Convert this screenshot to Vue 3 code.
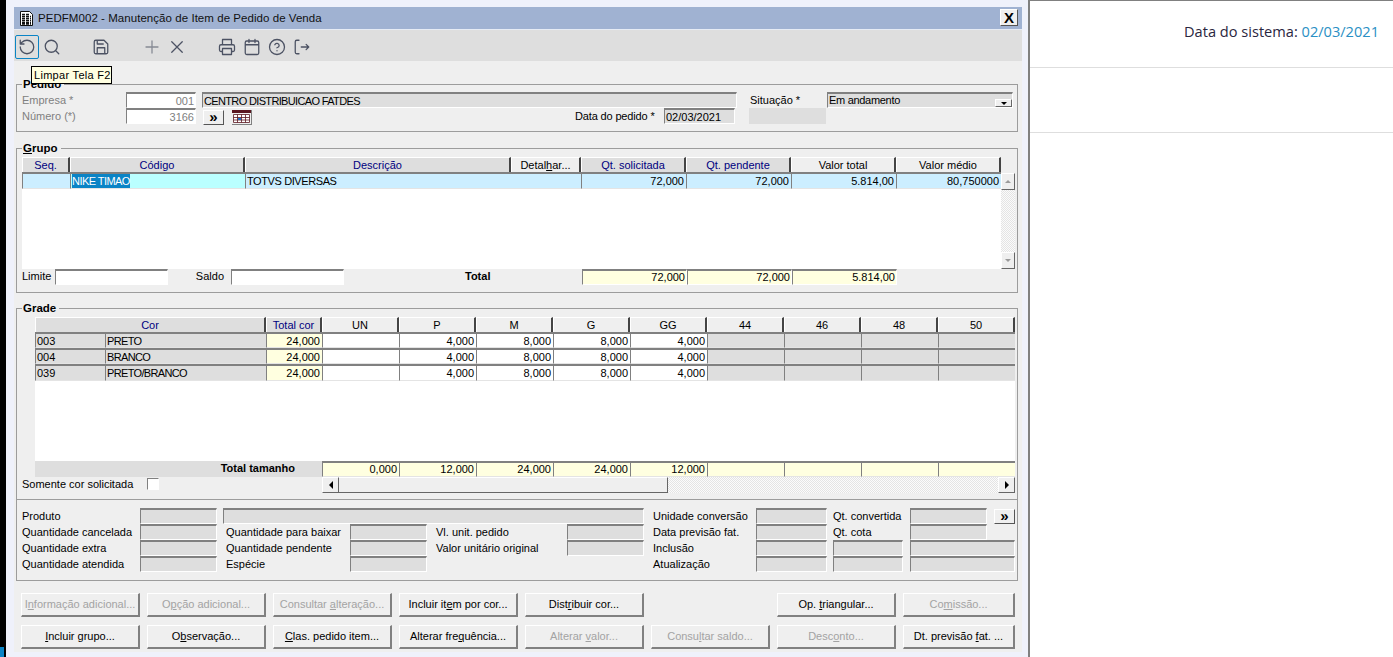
<script setup>
const icons = [
  { d: 'M3 12a9 9 0 1 0 9-9 9.75 9.75 0 0 0-6.74 2.74L3 8M3 3v5h5', cls: 'active' },
  { d: 'M11 3a8 8 0 1 0 0 16a8 8 0 1 0 0-16M21 21l-4.3-4.3', cls: '' },
  { d: 'M19 21H5a2 2 0 0 1-2-2V5a2 2 0 0 1 2-2h11l5 5v11a2 2 0 0 1-2 2zM17 21v-8H7v8M7 3v5h8', cls: 'ml25' },
  { d: 'M12 4v16M4 12h16', cls: 'ml27 faint' },
  { d: 'M5 5l14 14M19 5L5 19', cls: '' },
  { d: 'M6 9V2h12v7M6 18H4a2 2 0 0 1-2-2v-5a2 2 0 0 1 2-2h16a2 2 0 0 1 2 2v5a2 2 0 0 1-2 2h-2M6 14h12v8H6z', cls: 'ml26' },
  { d: 'M5 4h14a2 2 0 0 1 2 2v14a2 2 0 0 1-2 2H5a2 2 0 0 1-2-2V6a2 2 0 0 1 2-2zM8 2v4M16 2v4M8 4h8M3 9h18', cls: '' },
  { d: 'M12 2a10 10 0 1 0 0 20a10 10 0 1 0 0-20M9.1 9a3 3 0 0 1 5.8 1c0 2-3 3-3 3M12 17h.01', cls: '' },
  { d: 'M8 3H5a2 2 0 0 0-2 2v14a2 2 0 0 0 2 2h3M11 12h10M17.5 8.5l3.5 3.5-3.5 3.5', cls: '' },
]

const groupHeaders = [
  { t: 'Seq.', key: true }, { t: 'Código', key: true }, { t: 'Descrição', key: true },
  { a: 'Detal', u: 'h', b: 'ar...' }, { t: 'Qt. solicitada', key: true }, { t: 'Qt. pendente', key: true },
  { t: 'Valor total' }, { t: 'Valor médio' },
]
const groupRow = ['72,000', '72,000', '5.814,00', '80,750000']
const sizes = ['UN', 'P', 'M', 'G', 'GG', '44', '46', '48', '50']
const colors = [
  { c: '003', n: 'PRETO' },
  { c: '004', n: 'BRANCO' },
  { c: '039', n: 'PRETO/BRANCO' },
]
const rowVals = ['', '4,000', '8,000', '8,000', '4,000', null, null, null, null]
const totals = ['0,000', '12,000', '24,000', '24,000', '12,000', '', '', '', '']

const info = [
  { l: 'Produto', c: '1', r: 1 }, { f: 1, c: '2', r: 1 }, { f: 1, c: '4 / 9', r: 1 },
  { l: 'Unidade conversão', c: '10', r: 1 }, { f: 1, c: '11', r: 1 }, { l: 'Qt. convertida', c: '13 / 15', r: 1 }, { f: 1, c: '15', r: 1 },
  { l: 'Quantidade cancelada', c: '1', r: 2 }, { f: 1, c: '2', r: 2 }, { l: 'Quantidade para baixar', c: '4', r: 2, i: 1 }, { f: 1, c: '5', r: 2 },
  { l: 'Vl. unit. pedido', c: '7', r: 2 }, { f: 1, c: '8', r: 2 }, { l: 'Data previsão fat.', c: '10', r: 2 }, { f: 1, c: '11', r: 2 },
  { l: 'Qt. cota', c: '13 / 15', r: 2 }, { f: 1, c: '15', r: 2 },
  { l: 'Quantidade extra', c: '1', r: 3 }, { f: 1, c: '2', r: 3 }, { l: 'Quantidade pendente', c: '4', r: 3, i: 1 }, { f: 1, c: '5', r: 3 },
  { l: 'Valor unitário original', c: '7', r: 3 }, { f: 1, c: '8', r: 3 }, { l: 'Inclusão', c: '10', r: 3 }, { f: 1, c: '11', r: 3 }, { f: 1, c: '13', r: 3 }, { f: 1, c: '15 / 18', r: 3 },
  { l: 'Quantidade atendida', c: '1', r: 4 }, { f: 1, c: '2', r: 4 }, { l: 'Espécie', c: '4', r: 4, i: 1 }, { f: 1, c: '5', r: 4 },
  { l: 'Atualização', c: '10', r: 4 }, { f: 1, c: '11', r: 4 }, { f: 1, c: '13', r: 4 }, { f: 1, c: '15 / 18', r: 4 },
]

const buttons = [
  { a: 'I', u: 'n', b: 'formação adicional...', off: true },
  { a: 'O', u: 'p', b: 'ção adicional...', off: true },
  { a: 'Consultar ', u: 'a', b: 'lteração...', off: true },
  { a: 'Incluir it', u: 'e', b: 'm por cor...' },
  { a: 'Dist', u: 'r', b: 'ibuir cor...' },
  { empty: true },
  { a: 'Op. ', u: 't', b: 'riangular...' },
  { a: 'Co', u: 'm', b: 'issão...', off: true },
  { a: '', u: 'I', b: 'ncluir grupo...' },
  { a: 'O', u: 'b', b: 'servação...' },
  { a: '', u: 'C', b: 'las. pedido item...' },
  { a: 'Alterar fre', u: 'q', b: 'uência...' },
  { a: 'Alterar ', u: 'v', b: 'alor...', off: true },
  { a: 'Consu', u: 'l', b: 'tar saldo...', off: true },
  { a: 'Desc', u: 'o', b: 'nto...', off: true },
  { a: 'Dt. previsão ', u: 'f', b: 'at. ...' },
]
</script>

<template>
  <div class="page">
    <div class="strip"><div class="strip-blue"></div></div>
    <div class="main">
      <div class="window">
        <div class="titlebar">
          <svg class="doc" width="13" height="15" viewBox="0 0 13 15">
            <path d="M0.5 0.5h9l3 3v11h-12z" fill="#fff" stroke="#111" />
            <path d="M2 3.5h7M2 5.5h9M2 7.5h9M2 9.5h9M2 11.5h9M2 13h9" stroke="#111" stroke-width="1.3" stroke-dasharray="3 1" />
          </svg>
          <span class="title-text">PEDFM002 - Manutenção de Item de Pedido de Venda</span>
          <button class="close">X</button>
        </div>
        <div class="toolbar">
          <div v-for="(ic, i) in icons" :key="i" class="tool" :class="ic.cls">
            <svg width="18" height="18" viewBox="0 0 24 24" fill="none" stroke-width="1.7" stroke-linecap="round" stroke-linejoin="round">
              <path :d="ic.d" />
            </svg>
          </div>
        </div>
        <div class="body">
          <div class="tooltip">Limpar Tela F2</div>

          <section class="box pedido">
            <span class="legend">Pedido</span>
            <div class="frow">
              <span class="lbl dim w104">Empresa *</span>
              <span class="inp num dimtext w70">001</span>
              <span class="inp ro desc caps7">CENTRO DISTRIBUICAO FATDES</span>
              <span class="lbl situ">Situação *</span>
              <span class="inp ro sel">Em andamento<i class="drop"><b></b></i></span>
            </div>
            <div class="frow">
              <span class="lbl dim w104">Número (*)</span>
              <span class="inp num dimtext w70">3166</span>
              <button class="mini go">»</button>
              <svg class="cal" width="20" height="15" viewBox="0 0 20 15">
                <rect width="20" height="15" fill="#808080" />
                <rect width="19" height="14" fill="#efefef" />
                <rect width="19" height="3" fill="#5a1620" />
                <path d="M1.5 4.5h16v8h-16zM1.5 7.5h16M1.5 10h16M5.5 4.5v8M9.5 4.5v8M13.5 4.5v8" fill="#fff" stroke="#5a1620" stroke-width="0.8" />
                <rect x="6" y="8" width="3" height="2" fill="#1c6fc4" />
              </svg>
              <span class="lbl datelbl">Data do pedido *</span>
              <span class="inp ro dateinp">02/03/2021</span>
              <span class="graybox"></span>
            </div>
          </section>

          <section class="box grupo">
            <span class="legend"><u>G</u>rupo</span>
            <div class="gwrap">
              <div class="gleft">
                <div class="gcols">
                  <div v-for="(h, i) in groupHeaders" :key="i" class="hd" :class="{ key: h.key }">
                    <template v-if="h.t">{{ h.t }}</template>
                    <template v-else>{{ h.a }}<u>{{ h.u }}</u>{{ h.b }}</template>
                  </div>
                </div>
                <div class="gcols grow">
                  <div class="cell blue"></div>
                  <div class="cell cyan"><span class="selected caps5">NIKE TIMAO</span></div>
                  <div class="cell blue span2 caps4">TOTVS DIVERSAS</div>
                  <div v-for="(v, i) in groupRow" :key="i" class="cell blue right">{{ v }}</div>
                </div>
                <div class="gfill"></div>
              </div>
              <div class="vscroll">
                <div class="sb-btn"><b class="up"></b></div>
                <div class="sb-track"></div>
                <div class="sb-btn"><b class="down"></b></div>
              </div>
            </div>
            <div class="gtotal">
              <span class="lbl limite">Limite</span>
              <span class="inp white w113"></span>
              <span class="lbl saldo">Saldo</span>
              <span class="inp white w113"></span>
              <span class="totlbl">Total</span>
              <span class="inp yellow right w105">72,000</span>
              <span class="inp yellow right w105">72,000</span>
              <span class="inp yellow right w105">5.814,00</span>
            </div>
          </section>

          <section class="box grade">
            <span class="legend">Grade</span>
            <div class="rcols">
              <div class="hd key span2">Cor</div>
              <div class="hd key">Total cor</div>
              <div v-for="s in sizes" :key="s" class="hd">{{ s }}</div>
            </div>
            <div v-for="(c, ci) in colors" :key="c.c" class="rcols" :class="ci === 2 ? 'r17' : 'r16'">
              <div class="cell gray">{{ c.c }}</div>
              <div class="cell gray caps7">{{ c.n }}</div>
              <div class="cell yellowc right">24,000</div>
              <template v-for="(v, i) in rowVals" :key="i">
                <div class="cell right" :class="v === null ? 'gray' : 'whitec'">{{ v }}</div>
              </template>
            </div>
            <div class="rfill"></div>
            <div class="rcols r16">
              <div class="tot-label">Total tamanho</div>
              <div v-for="(t, i) in totals" :key="i" class="cell yellowc right tight">{{ t }}</div>
            </div>
            <div class="somente">
              <span class="lbl w125 up1">Somente cor solicitada</span>
              <span class="check"></span>
              <span class="hscroll">
                <span class="hbtn"><b class="left"></b></span>
                <span class="thumb"></span>
                <span class="htrack"></span>
                <span class="hbtn"><b class="rightarrow"></b></span>
              </span>
            </div>
          </section>

          <section class="box info">
            <div class="igrid">
              <template v-for="(it, i) in info" :key="i">
                <span v-if="it.f" class="inp ro" :style="{ gridColumn: it.c, gridRow: it.r }"></span>
                <span v-else class="lbl" :class="{ ind: it.i }" :style="{ gridColumn: it.c, gridRow: it.r }">{{ it.l }}</span>
              </template>
              <button class="mini more">»</button>
            </div>
          </section>

          <div class="actions">
            <template v-for="(b, i) in buttons" :key="i">
              <span v-if="b.empty"></span>
              <button v-else class="act" :class="{ off: b.off }">{{ b.a }}<u>{{ b.u }}</u>{{ b.b }}</button>
            </template>
          </div>
        </div>
      </div>
    </div>
    <aside class="side">
      <div class="side-top">Data do sistema: <span class="sysdate">02/03/2021</span></div>
      <div class="side-band"></div>
    </aside>
  </div>
</template>

<style>
html, body { margin: 0; background: #fff; overflow: hidden; }
</style>

<style scoped>
* { box-sizing: border-box; }
.page {
  display: flex; width: 1393px; height: 657px; overflow: hidden;
  font: 11px/14px "Liberation Sans", Arial, sans-serif; color: #000;
}
.strip { width: 6px; background: #000; display: flex; align-items: flex-end; }
.strip-blue { width: 4px; height: 10px; background: #0a84c6; }
.main { width: 1022px; background: #eff1fb; padding: 7px 6px 0 8px; }
.window { width: 1008px; }

.titlebar {
  height: 23px; background: #a0b2d2; border-bottom: 1px solid #e6ebf4;
  display: flex; align-items: center; padding: 0 4px 0 6px;
}
.doc { flex: none; }
.title-text { margin-left: 5px; font-size: 11.5px; letter-spacing: 0.05px; color: #111; flex: 1; }
.close {
  width: 18px; height: 17px; padding: 0; background: #efefef; font: bold 15px/13px "Liberation Sans", sans-serif; color: #000;
  border: 1px solid; border-color: #fff #555 #555 #fff; margin-bottom: 1px;
}

.toolbar { height: 31px; background: #dedede; display: flex; padding: 5px 0 0 1px; }
.tool {
  width: 24px; height: 24px; margin-left: 1px; display: flex; align-items: center; justify-content: center;
  stroke: #4c5263; border: 1px solid transparent;
}
.tool:first-child { margin-left: 0; }
.tool.active { border-color: #0a84c6; border-radius: 2px; }
.tool.ml25 { margin-left: 25px; }
.tool.ml27 { margin-left: 27px; }
.tool.ml26 { margin-left: 26px; }
.tool.faint { stroke: #868a94; }

.body { position: relative; height: 591px; background: #efefef; padding: 23px 4px 0 2px; }
.tooltip {
  position: absolute; left: 17px; top: 5px; z-index: 3; width: 81px; height: 18px; padding: 1px 2px;
  background: #ffffe1; border: 1px solid #000; white-space: nowrap; letter-spacing: 0.3px;
}

.box { position: relative; border: 1px solid #9c9c9c; width: 1002px; }
.legend {
  position: absolute; left: 5px; top: -7px; padding: 0 3px 0 1px; background: #efefef;
  font-weight: 700; font-size: 11.5px; line-height: 13px;
}
.pedido { height: 48px; padding: 7px 0 0 5px; }
.frow { display: flex; height: 16px; align-items: stretch; }
.lbl { line-height: 17px; white-space: nowrap; }
.up1 { line-height: 15px; }
.dim { color: #808080; }
.w104 { width: 104px; }
.w70 { width: 70px; }
.w113 { width: 113px; }
.w105 { width: 105px; }
.w125 { width: 125px; }
.caps4 { letter-spacing: -0.4px; }
.caps5 { letter-spacing: -0.55px; }
.caps7 { letter-spacing: -0.65px; }
.inp {
  display: block; height: 16px; line-height: 15px; padding: 0 1px; white-space: nowrap; overflow: hidden;
  border-style: solid; border-width: 2px 1px 1px 1px; border-color: #808080 #fff #fff #808080; background: #fff;
}
.ro { background: #dedede; }
.num { text-align: right; }
.dimtext { color: #808080; }
.desc { width: 535px; margin-left: 6px; }
.situ { width: 77px; margin-left: 13px; }
.sel { width: 186px; position: relative; line-height: 13px; letter-spacing: -0.3px; }
.drop {
  position: absolute; right: 0; top: 5px; width: 17px; height: 8px; background: #efefef;
  border: 1px solid; border-color: #fff #666 #666 #fff; display: flex; align-items: center; justify-content: center;
}
.drop b { border: 3px solid transparent; border-top-color: #000; border-bottom: 0; }
.mini {
  width: 21px; height: 15px; padding: 0 0 2px; background: #efefef; color: #000;
  font: bold 15px/10px "Liberation Sans", sans-serif; border: 1px solid; border-color: #fff #555 #555 #fff;
}
.go { margin: 2px 0 0 7px; }
.cal { margin: 2px 0 0 8px; flex: none; }
.datelbl { margin-left: 323px; width: 89px; letter-spacing: -0.15px; }
.dateinp { width: 71px; }
.graybox { width: 77px; height: 16px; margin-left: 14px; background: #dedede; }

.grupo { height: 145px; margin-top: 16px; padding: 8px 0 0 5px; }
.gwrap { display: flex; }
.gleft { width: 979px; }
.gcols { display: grid; grid-template-columns: 48px 175px 266px 70px 105px 105px 105px 105px; }
.hd {
  height: 15px; padding-top: 1px; line-height: 13px; text-align: center; white-space: nowrap; overflow: hidden;
  background: #efefef; border-top: 1px solid #fff; border-left: 1px solid #fff; border-right: 2px solid #444;
}
.hd.key { background: #dedede; color: #000080; }
.span2 { grid-column: span 2; }
.grow { height: 17px; }
.cell {
  height: 100%; padding: 0 1px; line-height: 15px; white-space: nowrap; overflow: hidden;
  border-style: solid; border-width: 2px 0 1px 1px; border-color: #808080 transparent #e4e4e4 #808080;
}
.cell.tight { line-height: 13px; }
.blue { background: #cceeff; }
.cyan { background: #baffff; }
.gray { background: #dedede; }
.whitec { background: #fff; }
.yellowc { background: #ffffe0; }
.inp.yellow { background: #ffffe0; }
.right { text-align: right; }
.inp.right { line-height: 13px; }
.cell.right { padding-right: 2px; }
.selected { background: #0a84c6; color: #fff; display: inline-block; height: 14px; }
.gfill { height: 80px; background: #fff; }
.vscroll { width: 14px; margin-top: 16px; height: 96px; display: flex; flex-direction: column; }
.sb-track, .htrack { flex: 1; background: repeating-conic-gradient(#e4e4e4 0 25%, #fbfbfb 0 50%) 0 0 / 2px 2px; }
.sb-btn {
  height: 17px; background: #efefef; border: 1px solid; border-color: #fff #666 #666 #fff;
  display: flex; align-items: center; justify-content: center;
}
.sb-btn b { width: 0; height: 0; border: 3px solid transparent; }
.up { border-top: 0 !important; border-bottom-color: #9a9a9a !important; }
.down { border-bottom: 0 !important; border-top-color: #9a9a9a !important; }
.gtotal { display: flex; height: 16px; }
.limite, .saldo { line-height: 14px; }
.limite { width: 33px; }
.saldo { width: 63px; text-align: right; padding-right: 7px; }
.totlbl { width: 238px; padding-left: 121px; font-weight: 700; line-height: 15px; }

.grade { height: 192px; margin-top: 15px; padding: 8px 0 0 5px; }
.rcols { display: grid; margin-left: 13px; width: 980px; grid-template-columns: 70px 161px 56px repeat(9, 77px); }
.r16 { height: 16px; }
.r17 { height: 17px; }
.rfill { margin-left: 13px; width: 980px; height: 80px; background: #fff; }
.tot-label {
  grid-column: span 3; background: #dedede; text-align: right; padding-right: 27px;
  font-weight: 700; line-height: 15px;
}
.somente { display: flex; height: 16px; }
.check {
  width: 12px; height: 12px; margin-top: 1px; background: #fff;
  border: 1px solid; border-color: #808080 #fff #fff #808080;
}
.hscroll { display: flex; width: 693px; height: 16px; margin-left: 163px; }
.hbtn {
  width: 17px; background: #efefef; border: 1px solid; border-color: #fff #666 #666 #fff;
  display: flex; align-items: center; justify-content: center;
}
.hbtn b { width: 0; height: 0; border: 4px solid transparent; }
.hbtn .left { border-left: 0; border-right-color: #000; }
.hbtn .rightarrow { border-right: 0; border-left-color: #000; }
.thumb { width: 329px; background: #efefef; border-bottom: 1px solid #666; border-right: 1px solid #666; border-top: 1px solid #fff; }

.info { height: 81px; border-top: 0; padding: 8px 0 0 5px; }
.igrid {
  display: grid; position: relative; grid-auto-rows: 16px;
  grid-template-columns: 118px 77px 6px 127px 77px 9px 131px 77px 9px 103px 71px 6px 70px 7px 77px 7px 21px;
}
.ind { padding-left: 3px; }
.more { grid-column: 17; grid-row: 1; margin-top: 1px; }

.actions {
  display: grid; margin: 12px 0 0 5px; grid-template-columns: repeat(7, 119px) 112px;
  grid-auto-rows: 24px; column-gap: 7px; row-gap: 8px;
}
.act {
  padding: 0 0 2px; background: #efefef; color: #000; font: inherit;
  border-style: solid; border-width: 1px 2px 2px 1px; border-color: #fff #808080 #808080 #fff; white-space: nowrap;
}
.act.off { color: #a3a3a3; }

.side { flex: 1; border-left: 2px solid #808080; border-top: 1px solid #808080; background: #fff; }
.side-top {
  height: 67px; border-bottom: 1px solid #dedede; text-align: right; padding: 21px 14px 0 0;
  font: 14.6px/18px "Open Sans", sans-serif; color: #2a2640;
}
.sysdate { color: #2a8fc4; }
.side-band { height: 65px; border-bottom: 1px solid #dedede; }
</style>
